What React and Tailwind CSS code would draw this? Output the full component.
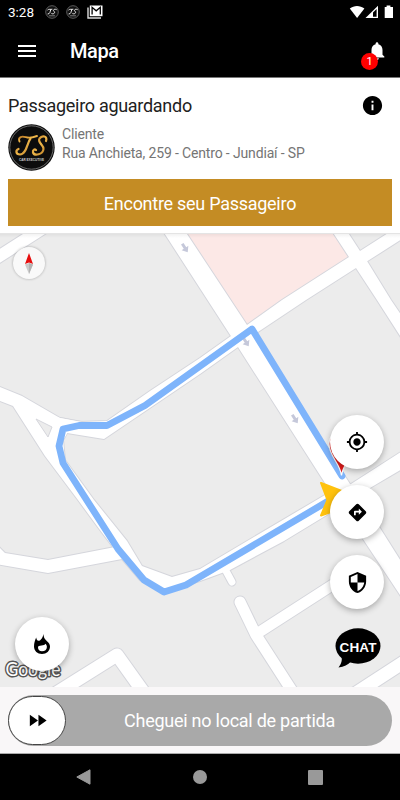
import React from "react";
import {
  MdMenu,
  MdInfo,
  MdNotifications,
  MdMyLocation,
  MdDirections,
  MdSecurity,
  MdFastForward,
} from "react-icons/md";

function MiniLogo() {
  return (
    <svg className="h-3.5 w-3.5" viewBox="0 0 14 14">
      <circle cx="7" cy="7" r="6.3" fill="#111" stroke="#666" strokeWidth="0.9" />
      <g fill="none" stroke="#eee" strokeWidth="1" strokeLinecap="round">
        <path d="M2.800 4.800C4 3.600 5.500 4.800 7 4.300M5.700 4.800C5 7 5 9 3 9" />
        <path d="M11.300 4.500C9.500 3.500 7.500 5 9 6.300C10.500 7.500 9 9.500 6.800 8.700" />
      </g>
      <path d="M4 10.800H10" stroke="#999" strokeWidth="0.800" />
    </svg>
  );
}

function StatusBar() {
  return (
    <div className="flex h-6 items-center bg-black pl-2 pr-1.5 text-white">
      <span className="w-[37px] text-[13.5px] leading-6">3:28</span>
      <div className="flex items-center gap-[7px]">
        <MiniLogo />
        <MiniLogo />
        <svg className="h-[14px] w-4" viewBox="0 0 16 14">
          <path d="M1 2.5V13h13" fill="none" stroke="#ddd" strokeWidth="1.4" />
          <path d="M2.8 0.5H15.5V11.2H2.8z" fill="#fff" />
          <path d="M5.1 9.500V2.300L9.200 5.800L13.300 2.300V9.500" fill="none" stroke="#000" strokeWidth="1.3" />
        </svg>
      </div>
      <svg className="ml-auto h-[14px] w-[45px]" viewBox="0 0 45 14">
        <path d="M0.8 3.6C5 0 11 0 15.4 3.6L8.1 13z" fill="#fff" />
        <path d="M16.5 13L29 0.8V13z" fill="#fff" />
        <path d="M24 7.500L27.600 4V11.800H24z" fill="#000" />
        <path d="M37.6 0.5h3.8V2H44v11H35.7V2h1.9z" fill="#fff" />
      </svg>
    </div>
  );
}

function AppBar() {
  return (
    <header className="flex h-[53px] items-center bg-black pl-[15px] pr-3 text-white">
      <MdMenu className="h-6 w-6" />
      <h1 className="ml-[31px] text-xl font-medium tracking-[-0.4px]">Mapa</h1>
      <div className="relative ml-auto">
        <MdNotifications className="h-[22px] w-[22px]" />
        <span className="absolute left-[-5px] top-[13px] flex h-[17px] w-[17px] items-center justify-center rounded-full bg-[#ff0000] text-[11px] leading-none">1</span>
      </div>
    </header>
  );
}

function Avatar() {
  return (
    <svg className="h-[47px] w-[47px] shrink-0" viewBox="0 0 47 47">
      <defs>
        <linearGradient id="gold" x1="0" y1="0" x2="1" y2="1">
          <stop offset="0" stopColor="#b8741f" />
          <stop offset="0.5" stopColor="#f0b84b" />
          <stop offset="1" stopColor="#b87a22" />
        </linearGradient>
      </defs>
      <circle cx="23.5" cy="23.5" r="23.2" fill="#0c0c0c" />
      <circle cx="23.5" cy="23.5" r="21.7" fill="none" stroke="#858585" strokeWidth="0.8" />
      <g fill="none" stroke="url(#gold)" strokeLinecap="round">
        <path d="M11.500 17.500C9.500 12.500 14 12 18 13.200C22 14.500 25 13.500 29 12" strokeWidth="1.900" />
        <path d="M22.500 14.500C19 19 18.500 30.500 12 30.500C7.500 30.500 7.500 26 10.500 25" strokeWidth="2.200" />
        <path d="M38 17C40 12 34 11 31.500 14.500C29 18.500 36 21 35.500 25C35 30.500 26.500 32.500 25 28.500C24.500 26 26.500 24.800 28 26" strokeWidth="2.200" />
        <path d="M14.500 21.500H22.500" strokeWidth="1.100" />
      </g>
      <text x="23.500" y="36.700" textAnchor="middle" fontFamily="Liberation Sans, sans-serif" fontWeight="bold" fontSize="4" textLength="25" lengthAdjust="spacingAndGlyphs" fill="#ccc">CAR EXECUTIVE</text>
    </svg>
  );
}

function PassengerCard() {
  return (
    <section className="h-[156px] border-b border-[#e4e4e4] bg-white px-2 pt-4">
      <div className="flex h-6 items-center justify-between pr-2">
        <h2 className="text-[18px] leading-6 tracking-[-0.29px] text-[#212121]">Passageiro aguardando</h2>
        <MdInfo className="-mt-0.5 h-[23px] w-[23px] text-black" />
      </div>
      <div className="mt-1.5 flex">
        <Avatar />
        <div className="ml-[7px] pt-px text-[14px] leading-[18.5px] tracking-[-0.15px] text-[#757575]">
          <p>Cliente</p>
          <p>Rua Anchieta, 259 - Centro - Jundiaí - SP</p>
        </div>
      </div>
      <button className="mt-2 block h-[47px] w-full bg-[#c48c24] pt-px text-[18px] tracking-[-0.27px] text-white">
        Encontre seu Passageiro
      </button>
    </section>
  );
}

const blocks = [
  "M-5 252L23 234V228H54L45 234L-5 266Z",
  "M161 228H183L247 325L350 484L380 528L404 566V601L363 539L325 483L238 347Z",
  "M396 228H410V234L366 262L356 268L306 300L258 332L238 347L200 374L104 439L67 433L60 418L80 422L107 421L150 391L200 358L231 336L247 325L282 300L349 257L360 251Z",
  "M330 228H345L360 251L367 261L391 300L404 319V342L377 300L356 268L349 257Z",
  "M-5 385L22 396L60 418L82 422L80 432L67 433L63 440L65 460L94 500L127 541L142 566L172 577L200 569L325 495L335 510L284 541L230 570L200 581L163 592L140 580L122 559L100 530L78 500L45 456L13 406L-5 399Z",
  "M-5 543L5 553L48 560L115 547L122 559L48 573L-5 564Z",
  "M345 487L351 484L404 450V468L370 488L355 500Z",
];

const lanes = [
  { d: "M50 697L117 655L147 697", w: 13 },
  { d: "M226 571L232 582", w: 7 },
  { d: "M240 602L256 635L296 697", w: 11 },
  { d: "M261 631L362 566", w: 10.5 },
  { d: "M350 697L410 658", w: 13 },
];

const oneWays = [
  [185, 248],
  [246, 342],
  [295, 419],
];

function StreetMap() {
  return (
    <svg className="block h-full w-full" viewBox="0 234 400 453">
      <rect x="0" y="234" width="400" height="453" fill="#ececec" />
      <path d="M183 228H330L349 257L247 325Z" fill="#fce8e6" />
      <g fill="none" stroke="#d5d6dc" strokeLinejoin="round" strokeLinecap="round">
        {blocks.map((d) => <path key={d} d={d} strokeWidth="2" />)}
        {lanes.map((l) => <path key={l.d} d={l.d} strokeWidth={l.w + 2} />)}
      </g>
      <g fill="#fff">
        {blocks.map((d) => <path key={d} d={d} />)}
        {lanes.map((l) => (
          <path key={l.d} d={l.d} fill="none" stroke="#fff" strokeWidth={l.w} strokeLinejoin="round" strokeLinecap="round" />
        ))}
      </g>
      <path d="M44 412L60 418L70 428L60 446L50 440Z" fill="#fff" />
      <path d="M36 419L52 427L48 437Z" fill="#ececec" stroke="#d5d6dc" strokeWidth="1" />
      {oneWays.map(([x, y]) => (
        <path key={x} d="M-5 -1.500H0V-4L5 0L0 4V1.500H-5Z" transform={`translate(${x} ${y}) rotate(57)`} fill="#c5c8da" />
      ))}
      <path
        d="M342 476L252 329L145 405.500L107 425.500H79L63 429L59 446L63 463L118 549L144 580L164 592L186 585L330 500"
        fill="none" stroke="#7eb4fb" strokeWidth="6.800" strokeLinejoin="round" strokeLinecap="round"
      />
      <path d="M341.500 475.500C340 463 329 456 329 444C329 428 354 428 354 444C354 456 343 463 341.500 475.500Z" fill="#e31b1b" stroke="#fff" strokeWidth="1.200" />
      <path d="M321 483L365 500L321 515.500L327.500 500Z" fill="#ffc20e" stroke="#ffc20e" strokeWidth="2" strokeLinejoin="round" />
    </svg>
  );
}

function RoundButton({ children, label }) {
  return (
    <button aria-label={label} className="flex h-[54px] w-[54px] items-center justify-center rounded-full bg-white text-black shadow-[0_2px_6px_rgba(0,0,0,0.3)]">
      {children}
    </button>
  );
}

function Flame() {
  return (
    <svg className="h-5 w-4" viewBox="0 0 16 20">
      <path
        fillRule="evenodd"
        d="M9.800 0C9.300 3 10.500 5 13 7.200C15 9 16 10.500 16 12.500C16 17 12.500 20 8 20C3.500 20 0 17 0 12.500C0 9 1 6 2.200 3.500C2.500 5.200 3 6.800 4.500 6.800C7 6.800 8.500 3.500 9.800 0ZM4 13.300C4 16 5.600 17.300 8 17.300C10.800 17.300 12.900 15.500 12.900 12.900C12.900 11.600 12.300 10.500 11.600 9.700C10.800 11.200 9.500 11.200 7.500 11.400C5.300 11.600 4 12 4 13.300Z"
        fill="#000"
      />
    </svg>
  );
}

function ChatBubble() {
  return (
    <svg className="ml-px mt-[3px] h-10 w-[46px]" viewBox="0 0 46 40">
      <ellipse cx="23" cy="18" rx="22.500" ry="17.700" fill="#000" />
      <path d="M6.500 28C7.500 33 6 36 3.500 39.500C9 39 13 36.500 16 33.500Z" fill="#000" />
      <text x="4.500" y="24.200" fontFamily="Liberation Sans, sans-serif" fontWeight="bold" fontSize="13.500" textLength="37" lengthAdjust="spacing" fill="#fff">CHAT</text>
    </svg>
  );
}

function MapArea() {
  return (
    <main className="relative h-[453px] overflow-hidden">
      <StreetMap />
      <div className="absolute inset-x-0 top-0 h-1 bg-gradient-to-b from-black/5 to-transparent" />
      <div className="absolute left-[13px] top-[13px] flex h-8 w-8 items-center justify-center rounded-full bg-[#f9f9f9] shadow-[0_0_2px_1px_rgba(0,0,0,0.14)]">
        <svg className="h-[21px] w-2" viewBox="0 0 8 21">
          <path d="M4 0L8 11L4 9.500L0 11Z" fill="#e60d0d" />
          <path d="M0 11.500L4 10L8 11.500L4 21Z" fill="#c9c9c9" />
          <path d="M4 10L8 11.500L4 21Z" fill="#b2b2b2" />
        </svg>
      </div>
      <svg className="absolute left-[3px] top-[424px] h-7 w-[62px]" viewBox="0 0 62 28">
        <text x="2.500" y="17.500" fontFamily="Lato, sans-serif" fontSize="18.500" textLength="55" lengthAdjust="spacingAndGlyphs" fill="#fff" stroke="#555" strokeWidth="3" strokeLinejoin="round" paintOrder="stroke">Google</text>
      </svg>
      <div className="absolute left-[15px] top-[383px]">
        <RoundButton label="Áreas de demanda"><Flame /></RoundButton>
      </div>
      <div className="absolute right-4 top-[181px] flex flex-col items-center gap-4">
        <RoundButton label="Minha localização"><MdMyLocation className="h-[22px] w-[22px]" /></RoundButton>
        <RoundButton label="Rota"><MdDirections className="h-[21px] w-[21px]" /></RoundButton>
        <RoundButton label="Segurança"><MdSecurity className="h-[23px] w-[23px]" /></RoundButton>
        <ChatBubble />
      </div>
    </main>
  );
}

function SlideAction() {
  return (
    <div className="h-[67px] border-b border-[#aaa] bg-[#f9f7f8] px-2 pt-2">
      <div className="flex h-[51px] items-center rounded-full bg-[#a9a9a9]">
        <div className="flex h-[49px] w-[58px] items-center justify-center rounded-[25px] border border-[#444] bg-white text-black">
          <MdFastForward className="h-[23px] w-[23px]" />
        </div>
        <span className="ml-[58px] text-[18px] tracking-[-0.25px] text-white">Cheguei no local de partida</span>
      </div>
    </div>
  );
}

function NavigationBar() {
  return (
    <nav className="flex h-[46px] items-center justify-between bg-black pl-[76px] pr-[77px]">
      <svg className="h-4 w-[15px]" viewBox="0 0 15 16"><path d="M0.800 8L14 0.800V15.200Z" fill="#999" stroke="#999" strokeLinejoin="round" /></svg>
      <span className="h-[14px] w-[14px] rounded-full bg-[#999]" />
      <span className="h-[15px] w-[15px] rounded-[1px] bg-[#999]" />
    </nav>
  );
}

export default function App() {
  return (
    <div className="flex h-[800px] w-[400px] flex-col overflow-hidden bg-black font-[Roboto,sans-serif]">
      <StatusBar />
      <AppBar />
      <div className="h-px bg-[#777]" />
      <PassengerCard />
      <MapArea />
      <SlideAction />
      <NavigationBar />
    </div>
  );
}
